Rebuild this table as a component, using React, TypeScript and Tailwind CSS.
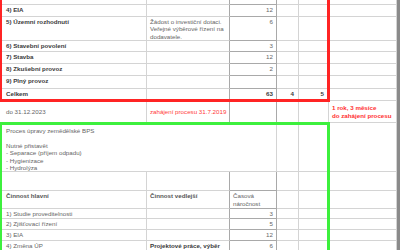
import React from 'react';

const grid = "grid grid-cols-[147px_83px_47px_22px_30px_68px]";
const line = "border-r border-b border-[#d4d4d4]";
const dark = "border-r border-b border-[#a9a9a9]";

function Cell({ children, className = '' }: { children?: React.ReactNode; className?: string }) {
  return <div className={`${line} overflow-hidden whitespace-nowrap ${className}`}>{children}</div>;
}

function NumCell({ children, className = '' }: { children?: React.ReactNode; className?: string }) {
  return <div className={`${dark} overflow-hidden text-right pr-[3px] pt-[1px] ${className}`}>{children}</div>;
}

const phases = [
  { label: '4) EIA', months: '12', h: 'h-[12px]' },
  { label: '5) Územní rozhodnutí', months: '6', h: 'h-[24px]', note: ['Žádost o investiční dotaci.', 'Veřejné výběrové řízení na', 'dodavatele.'] },
  { label: '6) Stavební povolení', months: '3', h: 'h-[11px]' },
  { label: '7) Stavba', months: '12', h: 'h-[12px]' },
  { label: '8) Zkušební provoz', months: '2', h: 'h-[12px]' },
  { label: '9) Plný provoz', months: '', h: 'h-[13px]' },
];

const steps = [
  { label: '1) Studie proveditelnosti', side: '', months: '3', h: 'h-[10px]' },
  { label: '2) Zjišťovací řízení', side: '', months: '5', h: 'h-[11px]' },
  { label: '3) EIA', side: '', months: '12', h: 'h-[11px]' },
  { label: '4) Změna ÚP', side: 'Projektové práce, výběr', months: '6', h: 'h-[11px]' },
];

export default function App() {
  return (
    <div className="w-[400px] h-[250px] overflow-hidden bg-white flex font-['Liberation_Sans',Arial,sans-serif] text-[6.2px] leading-[7.5px] text-[#666]">
      <div className="relative w-[397px]">
        {/* top of the red block */}
        <div className={`${grid} h-[5px]`}>
          <Cell /><Cell className="border-r-[#a9a9a9]" /><NumCell /><Cell /><Cell /><Cell />
        </div>

        {phases.map((p) => (
          <div key={p.label} className={`${grid} ${p.h}`}>
            <Cell className="pl-[6px] pt-[1px] font-bold text-[#3a3a3a]">{p.label}</Cell>
            <Cell className="pl-[3px] pt-[0.5px] border-r-[#a9a9a9]">
              {p.note?.map((n) => <div key={n}>{n}</div>)}
            </Cell>
            <NumCell>{p.months}</NumCell>
            <Cell /><Cell /><Cell />
          </div>
        ))}

        <div className={`${grid} h-[12px] font-bold text-[#3a3a3a]`}>
          <Cell className="pl-[6px] pt-[1px]">Celkem</Cell>
          <Cell className="border-r-[#a9a9a9]" />
          <NumCell>63</NumCell>
          <Cell className="text-right pr-[4px] pt-[1px]">4</Cell>
          <Cell className="text-right pr-[4px] pt-[1px]">5</Cell>
          <Cell />
        </div>

        {/* deadline row */}
        <div className={`${grid} h-[22px]`}>
          <Cell className="pl-[6px] flex items-center pt-[1px]">do 31.12.2023</Cell>
          <Cell className="pl-[3px] flex items-center pt-[1px] text-[#ff3b3b] border-r-[#a9a9a9]">zahájení procesu 31.7.2019</Cell>
          <Cell className="border-r-[#a9a9a9]" />
          <Cell /><Cell />
          <Cell className="pl-[3px] flex flex-col justify-center font-bold text-[#ff3030] leading-[8px]">
            <div>1 rok, 3 měsíce</div>
            <div>do zahájení procesu</div>
          </Cell>
        </div>

        {/* green block */}
        <div className={`${grid} h-[49px]`}>
          <Cell className="col-span-3 pl-[6px] pt-[4px]">
            <div>Proces úpravy zemědělské BPS</div>
            <div className="h-[7px]" />
            <div>Nutné přistavět</div>
            <div>- Separace (příjem odpadu)</div>
            <div>- Hygienizace</div>
            <div>- Hydrolýza</div>
          </Cell>
          <Cell /><Cell /><Cell />
        </div>

        <div className={`${grid} h-[19px]`}>
          <Cell /><Cell className="border-r-[#a9a9a9]" /><Cell className="border-b-[#a9a9a9] border-r-[#a9a9a9]" /><Cell /><Cell /><Cell />
        </div>

        <div className={`${grid} h-[18px]`}>
          <Cell className="pl-[6px] pt-[1px] font-bold text-[#555]">Činnost hlavní</Cell>
          <Cell className="pl-[3px] pt-[1px] font-bold text-[#555] border-r-[#a9a9a9]">Činnost vedlejší</Cell>
          <div className={`${dark} pl-[3px] pt-[1px]`}>
            <div>Časová</div>
            <div>náročnost</div>
          </div>
          <Cell /><Cell /><Cell />
        </div>

        {steps.map((s) => (
          <div key={s.label} className={`${grid} ${s.h}`}>
            <Cell className="pl-[6px] pt-[1px]">{s.label}</Cell>
            <Cell className="pl-[3px] pt-[1px] font-bold text-[#3a3a3a] border-r-[#a9a9a9]">{s.side}</Cell>
            <NumCell>{s.months}</NumCell>
            <Cell /><Cell /><Cell />
          </div>
        ))}

        {/* highlight frames drawn over the sheet */}
        <div className="absolute left-[-1px] top-[-10px] w-[331px] h-[112px] border-[3px] border-[#ff2424] pointer-events-none" />
        <div className="absolute left-[-1px] top-[122px] w-[331px] h-[200px] border-[3px] border-[#3df03d] pointer-events-none" />
      </div>
      <div className="w-[3px] bg-[#8a8a8a]" />
    </div>
  );
}
